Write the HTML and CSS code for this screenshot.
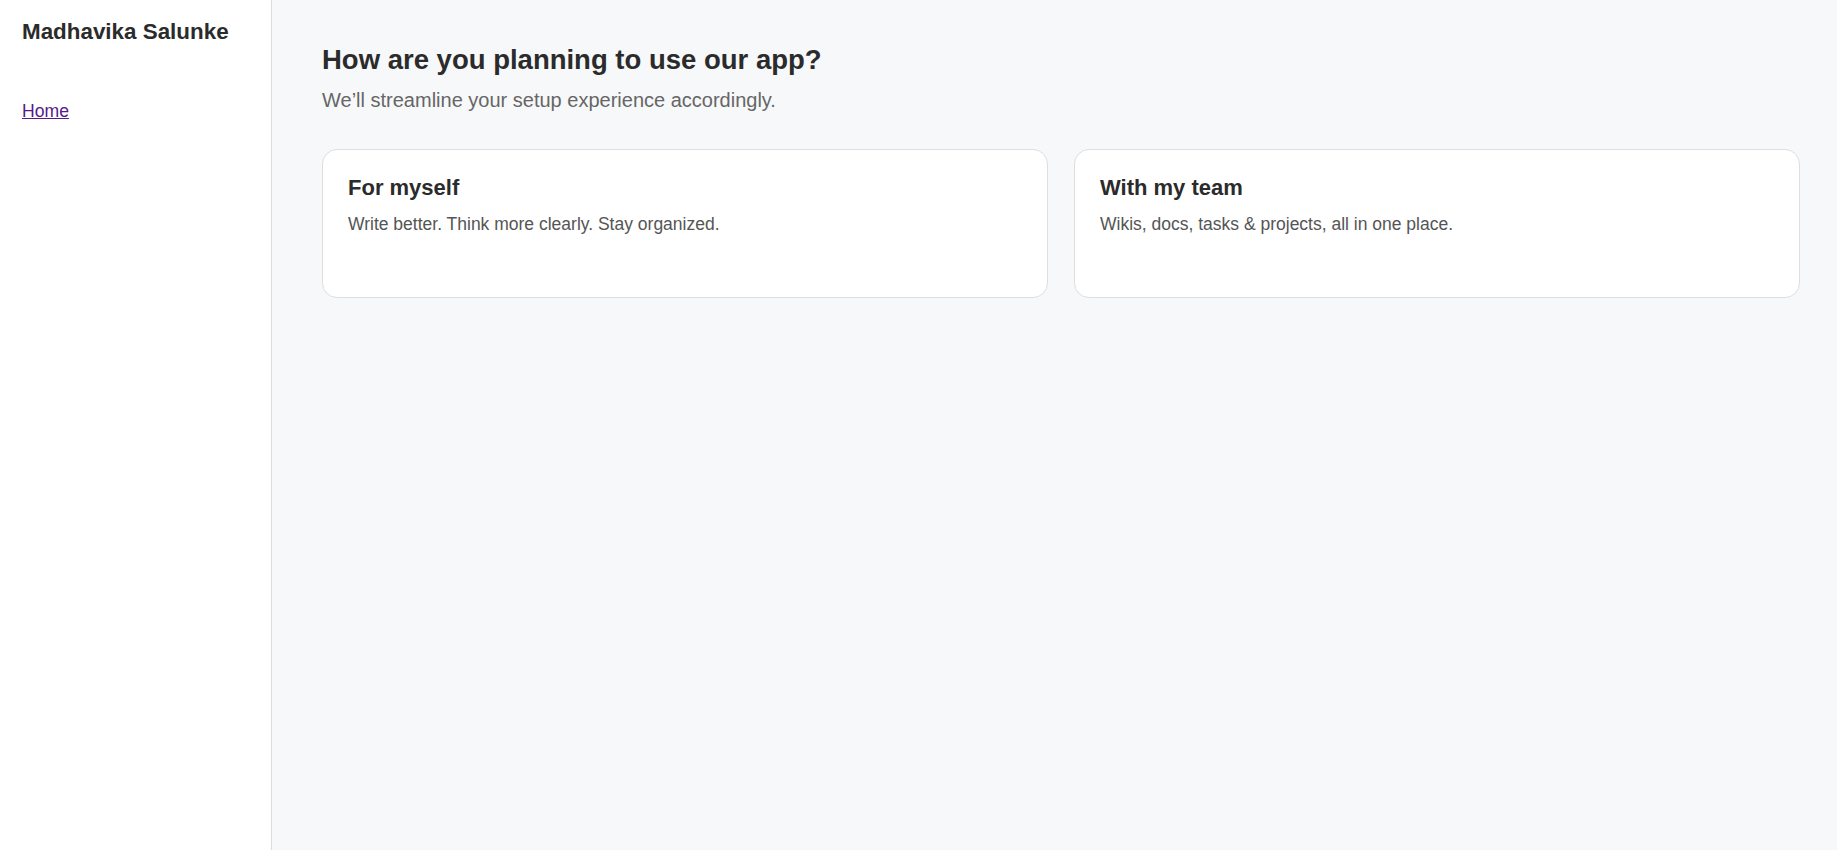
FILE: index.html
```html
<!DOCTYPE html>
<html lang="en">
<head>
<meta charset="utf-8">
<title>Onboarding</title>
<link rel="stylesheet" href="styles.css">
</head>
<body>
<div class="layout">
  <aside class="sidebar">
    <h2 class="sidebar-title">Madhavika Salunke</h2>
    <nav class="sidebar-nav">
      <a class="nav-link" href="#">Home</a>
    </nav>
  </aside>
  <main class="main">
    <h1 class="page-title">How are you planning to use our app?</h1>
    <p class="page-subtitle">We’ll streamline your setup experience accordingly.</p>
    <div class="options">
      <div class="option-card">
        <h3 class="option-title">For myself</h3>
        <p class="option-desc">Write better. Think more clearly. Stay organized.</p>
      </div>
      <div class="option-card">
        <h3 class="option-title">With my team</h3>
        <p class="option-desc">Wikis, docs, tasks &amp; projects, all in one place.</p>
      </div>
    </div>
  </main>
</div>
</body>
</html>
```
FILE: styles.css
```css
html, body {
  margin: 0;
  padding: 0;
  height: 100%;
}
body {
  font-family: "Liberation Sans", Arial, sans-serif;
  color: #2b2b2b;
  background: #f7f8fa;
}
.layout {
  display: flex;
  min-height: 100vh;
}
.sidebar {
  width: 272px;
  flex-shrink: 0;
  box-sizing: border-box;
  background: #ffffff;
  border-right: 1px solid #dcdcdc;
  padding: 19px 22px;
}
.sidebar-title {
  margin: 0;
  font-size: 22.4px;
  font-weight: 700;
  color: #2b2b2b;
  line-height: normal;
}
.sidebar-nav {
  margin-top: 56px;
  display: flex;
  flex-direction: column;
}
.nav-link {
  font-size: 17.6px;
  color: #551a8b;
  text-decoration: underline;
}
.main {
  flex: 1;
  padding: 44px 37px 0 50px;
  min-width: 0;
}
.page-title {
  margin: 0;
  font-size: 27.5px;
  font-weight: 700;
  line-height: normal;
  color: #2b2b2b;
}
.page-subtitle {
  margin: 12.5px 0 0;
  font-size: 20px;
  line-height: normal;
  color: #666666;
}
.options {
  margin-top: 37.5px;
  display: grid;
  grid-template-columns: 1fr 1fr;
  gap: 26px;
}
.option-card {
  box-sizing: border-box;
  height: 149px;
  background: #ffffff;
  border: 1px solid #dedede;
  border-radius: 15px;
  padding: 25px;
}
.option-title {
  margin: 0;
  font-size: 22px;
  font-weight: 700;
  line-height: normal;
  color: #2b2b2b;
}
.option-desc {
  margin: 13px 0 0;
  font-size: 17.5px;
  line-height: normal;
  color: #555555;
}
```
